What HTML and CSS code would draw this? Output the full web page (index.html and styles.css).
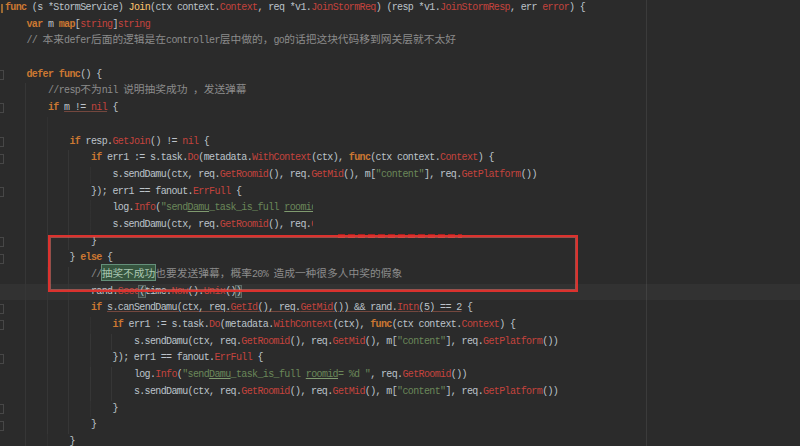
FILE: index.html
```html
<!DOCTYPE html>
<html lang="zh">
<head>
    <meta charset="UTF-8">
    <meta name="viewport" content="width=device-width, initial-scale=1.0">
    <title>Join - StormService</title>
    <link rel="stylesheet" href="styles.css">
</head>
<body>

<div class="editor">
    <!-- 代码行 -->
    <div class="line"><span class="gut cur"></span><span class="code"><b class="kw">func</b> (s *StormService) <span class="fn">Join</span>(ctx context.<span class="er">Context</span>, req *v1.<span class="er">JoinStormReq</span>) (resp *v1.<span class="er">JoinStormResp</span>, err <span class="er">error</span>) {</span></div>
    <div class="line"><span class="gut"></span><span class="ind l1"></span><span class="code"><b class="kw">var</b> m <b class="kw">map</b>[<span class="er">string</span>]<span class="er">string</span></span></div>
    <div class="line"><span class="gut"></span><span class="ind l1"></span><span class="code cm">// <span class="cn">本来</span>defer<span class="cn">后面的逻辑是在</span>controller<span class="cn">层中做的，</span>go<span class="cn">的话把这块代码移到网关层就不太好</span></span></div>
    <div class="line"><span class="gut"></span><span class="ind l1"></span><span class="code"></span></div>
    <div class="line fold"><span class="gut"></span><span class="ind l1"></span><span class="code"><b class="kw">defer</b> <b class="kw">func</b>() {</span></div>
    <div class="line"><span class="gut"></span><span class="ind l2"></span><span class="code cm">//resp<span class="cn">不为</span>nil <span class="cn">说明抽奖成功</span> <span class="cn">，发送弹幕</span></span></div>
    <div class="line fold"><span class="gut"></span><span class="ind l2"></span><span class="code"><b class="kw">if</b> <span class="warn">m != <span class="er">nil</span></span> {</span></div>
    <div class="line"><span class="gut"></span><span class="ind l3"></span><span class="code"></span></div>
    <div class="line fold"><span class="gut"></span><span class="ind l3"></span><span class="code"><b class="kw">if</b> resp.<span class="er">GetJoin</span>() != <span class="er">nil</span> {</span></div>
    <div class="line fold"><span class="gut"></span><span class="ind l4"></span><span class="code"><b class="kw">if</b> err1 := s.task.<span class="er">Do</span>(metadata.<span class="er">WithContext</span>(ctx), <b class="kw">func</b>(ctx context.<span class="er">Context</span>) {</span></div>
    <div class="line"><span class="gut"></span><span class="ind l5"></span><span class="code">s.sendDamu(ctx, req.<span class="er">GetRoomid</span>(), req.<span class="er">GetMid</span>(), m[<span class="st">"content"</span>], req.<span class="er">GetPlatform</span>())</span></div>
    <div class="line fold"><span class="gut"></span><span class="ind l4"></span><span class="code">}); err1 == fanout.<span class="er">ErrFull</span> {</span></div>
    <div class="line"><span class="gut"></span><span class="ind l5"></span><span class="code cut">log.<span class="er">Info</span>(<span class="st">"send<span class="typo">Damu</span>_task_is_full <span class="typo">roomid</span>= %d "</span>, req.<span class="er">GetRoomid</span>())</span></div>
    <div class="line"><span class="gut"></span><span class="ind l5"></span><span class="code cut">s.sendDamu(ctx, req.<span class="er">GetRoomid</span>(), req.<span class="er">GetMid</span>(), m[<span class="st">"content"</span>], req.<span class="er">GetPlatform</span>())</span></div>
    <div class="line fold"><span class="gut"></span><span class="ind l4"></span><span class="code">}</span></div>
    <div class="line fold"><span class="gut"></span><span class="ind l3"></span><span class="code">} <b class="kw">else</b> {</span></div>
    <div class="line"><span class="gut"></span><span class="ind l4"></span><span class="code cm">//<span class="cn hit">抽奖不成功</span><span class="cn">也要发送弹幕，概率</span>20% <span class="cn">造成一种很多人中奖的假象</span></span></div>
    <div class="line now"><span class="gut"></span><span class="ind l4"></span><span class="code">rand.<span class="er">Seed</span><span class="pair">(</span>time.<span class="er">Now</span>().<span class="er">Unix</span>()<span class="pair">)</span></span></div>
    <div class="line fold"><span class="gut"></span><span class="ind l4"></span><span class="code"><b class="kw">if</b> <span class="warn">s.canSendDamu(ctx, req.<span class="er">GetId</span>(), req.<span class="er">GetMid</span>()) &amp;&amp; rand.<span class="er">Intn</span>(5) == 2</span> {</span></div>
    <div class="line fold"><span class="gut"></span><span class="ind l5"></span><span class="code"><b class="kw">if</b> err1 := s.task.<span class="er">Do</span>(metadata.<span class="er">WithContext</span>(ctx), <b class="kw">func</b>(ctx context.<span class="er">Context</span>) {</span></div>
    <div class="line"><span class="gut"></span><span class="ind l6"></span><span class="code">s.sendDamu(ctx, req.<span class="er">GetRoomid</span>(), req.<span class="er">GetMid</span>(), m[<span class="st">"content"</span>], req.<span class="er">GetPlatform</span>())</span></div>
    <div class="line fold"><span class="gut"></span><span class="ind l5"></span><span class="code">}); err1 == fanout.<span class="er">ErrFull</span> {</span></div>
    <div class="line"><span class="gut"></span><span class="ind l6"></span><span class="code">log.<span class="er">Info</span>(<span class="st">"send<span class="typo">Damu</span>_task_is_full <span class="typo">roomid</span>= %d "</span>, req.<span class="er">GetRoomid</span>())</span></div>
    <div class="line"><span class="gut"></span><span class="ind l6"></span><span class="code">s.sendDamu(ctx, req.<span class="er">GetRoomid</span>(), req.<span class="er">GetMid</span>(), m[<span class="st">"content"</span>], req.<span class="er">GetPlatform</span>())</span></div>
    <div class="line fold"><span class="gut"></span><span class="ind l5"></span><span class="code">}</span></div>
    <div class="line fold"><span class="gut"></span><span class="ind l4"></span><span class="code">}</span></div>
    <div class="line"><span class="gut"></span><span class="ind l3"></span><span class="code">}</span></div>

    <!-- 标注框 -->
    <div class="mark-dash"></div>
    <div class="mark-box"></div>
</div>

</body>
</html>
```

FILE: styles.css
```css
body {
    margin: 0;
    background: #2b2b2b;
}
.editor {
    position: relative;
    width: 800px;
    height: 446px;
    overflow: hidden;
    background: #2b2b2b linear-gradient(to right, transparent 646px, #3b3b3b 646px, #3b3b3b 647px, transparent 647px);
    font-family: "Liberation Mono", "DejaVu Sans Mono", monospace;
    font-size: 10px;
    letter-spacing: -0.63px;
    color: #bcc3ca;
}
.line {
    display: flex;
    height: 16.7px;
    line-height: 16.7px;
}
.line.now {
    background: rgba(255, 255, 255, 0.035);
}
.gut {
    flex: none;
    width: 5px;
    display: flex;
    align-items: center;
}
.fold .gut::before {
    content: "";
    width: 3px;
    height: 8px;
    border: 1px solid #474747;
    border-left: none;
}
.gut.cur::before {
    content: "";
    width: 2px;
    height: 9px;
    margin-left: 1px;
    background: #9c6a32;
}
.ind {
    flex: none;
    background-image: repeating-linear-gradient(to right, transparent 0, transparent 20.48px, #363636 20.48px, #363636 21.48px);
    background-repeat: no-repeat;
    background-size: calc(100% - 21.48px) 100%;
}
.l1 { width: 21.48px; }
.l2 { width: 42.96px; }
.l3 { width: 64.44px; }
.l4 { width: 85.92px; }
.l5 { width: 107.4px; }
.l6 { width: 128.88px; }
.code {
    white-space: pre;
}
.code.cut {
    flex: none;
    width: 201px;
    overflow: hidden;
}
.kw {
    color: #cc7832;
    font-weight: bold;
}
.fn { color: #ffc66d; }
.er { color: #c4433d; }
.st { color: #6a8759; }
.cm { color: #8c8c8c; }
.cn {
    font-family: "Noto Sans CJK SC", sans-serif;
    font-size: 10.74px;
    letter-spacing: 0;
    line-height: 1;
}
.typo {
    text-decoration: underline;
    text-decoration-color: #7f9a6f;
}
.warn {
    text-decoration: underline;
    text-decoration-color: #74473e;
}
.hit {
    background: #36553f;
    outline: 1px solid #64907a;
    color: #a8c6b0;
}
.pair {
    background: #3a4542;
    outline: 1px solid #5d6a66;
}
.mark-box {
    position: absolute;
    left: 48px;
    top: 235px;
    width: 526px;
    height: 53px;
    border: 2px solid #dc322e;
    box-shadow: inset 0 0 0 1px rgba(235, 110, 100, 0.55);
}
.mark-dash {
    position: absolute;
    left: 338px;
    top: 234px;
    width: 124px;
    height: 4px;
    background: repeating-linear-gradient(to right, #a81e1c 0, #a81e1c 7px, transparent 7px, transparent 10px);
}
```
